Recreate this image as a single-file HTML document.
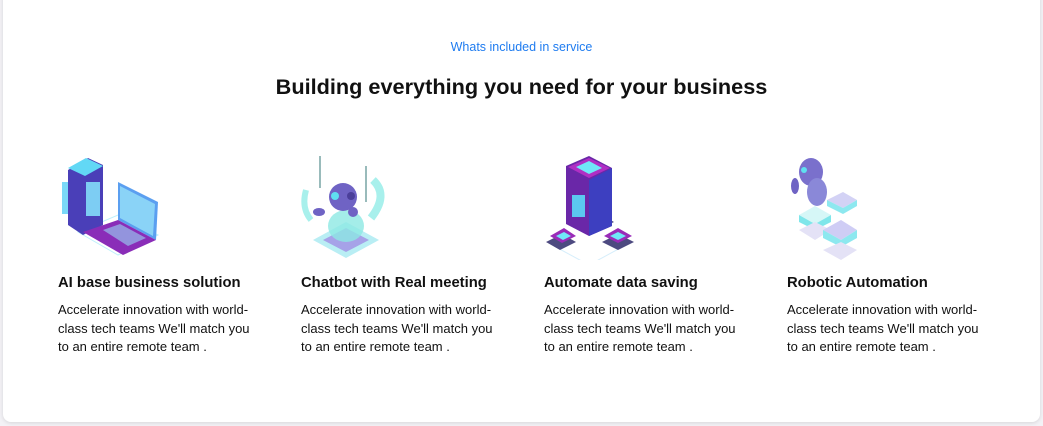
<!DOCTYPE html><html><head><style>
body{margin:0;width:1043px;height:426px;background:#f3f2f6;font-family:"Liberation Sans",sans-serif;overflow:hidden;position:relative}
.card{position:absolute;left:3px;top:-10px;width:1037px;height:432px;background:#fff;border-radius:8px;box-shadow:0 1px 4px rgba(0,0,0,.12)}
.sub{position:absolute;top:40px;left:0;width:1043px;text-align:center;color:#1f7cf0;font-size:12.5px}
h1{position:absolute;top:74px;left:0;width:1043px;text-align:center;margin:0;font-size:21.7px;font-weight:600;color:#111}
.col{position:absolute;top:150px;width:210px}
.col svg{display:block;width:110px;height:110px}
.col h3{margin:0;position:absolute;top:125px;font-size:14.8px;font-weight:600;color:#111;white-space:nowrap}
.col p{margin:0;position:absolute;top:151px;font-size:13px;line-height:18.5px;color:#111;width:200px}
</style></head><body>
<div class="card"></div>
<div class="sub">Whats included in service</div>
<h1>Building everything you need for your business</h1>

<div class="col" style="left:58px"><svg viewBox="0 0 110 110">
<path d="M20 82 L60 105 L100 85 L60 65Z" fill="none" stroke="#bdf0fb"/>
<rect x="4" y="32" width="6" height="32" fill="#7ad8f8"/>
<path d="M10 20 L30 8 L45 15 L45 75 L25 85 L10 75Z" fill="#4a3fb8"/>
<path d="M10 18 L28 8 L45 16 L27 26Z" fill="#62d8f5"/>
<rect x="28" y="32" width="14" height="34" fill="#7dcdf3"/>
<path d="M60 32 L100 52 L98 90 L60 70Z" fill="#5b9ff0"/>
<path d="M62 36 L97 54 L95 86 L62 68Z" fill="#8ad3f7"/>
<path d="M25 82 L60 70 L98 90 L65 105Z" fill="#8a2db8"/>
<path d="M45 80 L62 74 L88 88 L70 96Z" fill="#9ad8f5" opacity=".6"/>
</svg><h3>AI base business solution</h3><p>Accelerate innovation with world-class tech teams We'll match you to an entire remote team .</p></div>

<div class="col" style="left:301px"><svg viewBox="0 0 110 110">
<rect x="18" y="6" width="2" height="32" fill="#9bb"/><rect x="64" y="16" width="2" height="36" fill="#9bb"/>
<path d="M5 40 Q0 58 10 70" stroke="#a8f0ec" stroke-width="6" fill="none"/>
<path d="M72 30 Q88 45 70 68" stroke="#a8f0ec" stroke-width="8" fill="none"/>
<path d="M12 90 L45 72 L78 90 L45 108Z" fill="#b9eef4"/>
<path d="M22 90 L45 78 L68 90 L45 102Z" fill="#a6a2e8"/>
<ellipse cx="45" cy="76" rx="18" ry="16" fill="#8de8e4" opacity=".8"/>
<ellipse cx="42" cy="47" rx="14" ry="14" fill="#6f63c4"/>
<circle cx="34" cy="46" r="4" fill="#5fe0f0"/><circle cx="50" cy="46" r="4" fill="#4b3f9a"/>
<ellipse cx="18" cy="62" rx="6" ry="4" fill="#6f63c4"/><ellipse cx="52" cy="62" rx="5" ry="5" fill="#6f63c4"/>
</svg><h3>Chatbot with Real meeting</h3><p>Accelerate innovation with world-class tech teams We'll match you to an entire remote team .</p></div>

<div class="col" style="left:544px"><svg viewBox="0 0 110 110">
<path d="M10 96 L45 115 L80 96" fill="none" stroke="#d6eefb"/>
<path d="M23 70 L45 58 L70 72 L45 84Z" fill="#4d4a80"/>
<path d="M22 16 L45 6 L68 18 L68 76 L45 86 L22 74Z" fill="#6a27a8"/>
<path d="M45 30 L68 18 L68 76 L45 86Z" fill="#3d3fc0"/>
<path d="M24 17 L45 8 L66 18 L45 28Z" fill="#b02fc4"/>
<path d="M32 17 L45 11 L58 18 L45 24Z" fill="#6fe8f8"/>
<rect x="28" y="45" width="13" height="22" fill="#5bc8f0"/>
<path d="M2 92 L18 84 L32 92 L16 100Z" fill="#4d4a80"/><path d="M6 86 L20 78 L32 86 L18 93Z" fill="#9a2bb8"/><path d="M12 86 L20 82 L27 86 L19 90Z" fill="#6fe8f8"/>
<path d="M58 92 L74 84 L90 92 L74 100Z" fill="#4d4a80"/><path d="M60 86 L74 78 L88 86 L74 93Z" fill="#9a2bb8"/><path d="M66 86 L74 82 L82 86 L74 90Z" fill="#6fe8f8"/>
</svg><h3>Automate data saving</h3><p>Accelerate innovation with world-class tech teams We'll match you to an entire remote team .</p></div>

<div class="col" style="left:787px"><svg viewBox="0 0 110 110">
<path d="M40 50 L56 42 L70 50 L56 58Z" fill="#d3d2f5"/><path d="M40 50 L56 58 L70 50 L70 56 L56 64 L40 56Z" fill="#8de8ef"/>
<path d="M12 65 L28 56 L44 65 L28 74Z" fill="#d6f7f7"/><path d="M12 65 L28 74 L44 65 L44 72 L28 80 L12 72Z" fill="#7fe6ea"/>
<path d="M12 80 L28 72 L44 80 L28 90Z" fill="#e4e2f6"/>
<path d="M36 80 L54 70 L70 80 L54 90Z" fill="#cfcdf5"/><path d="M36 80 L54 90 L70 80 L70 88 L54 97 L36 88Z" fill="#8de8ef"/>
<path d="M36 100 L54 92 L70 100 L54 110Z" fill="#e4e2f6"/>
<ellipse cx="24" cy="22" rx="12" ry="14" fill="#7a70cc"/><circle cx="17" cy="20" r="3" fill="#5fe0f0"/>
<ellipse cx="30" cy="42" rx="10" ry="14" fill="#8a88d8"/>
<ellipse cx="8" cy="36" rx="4" ry="8" fill="#6f63c4"/>
</svg><h3>Robotic Automation</h3><p>Accelerate innovation with world-class tech teams We'll match you to an entire remote team .</p></div>
</body></html>
